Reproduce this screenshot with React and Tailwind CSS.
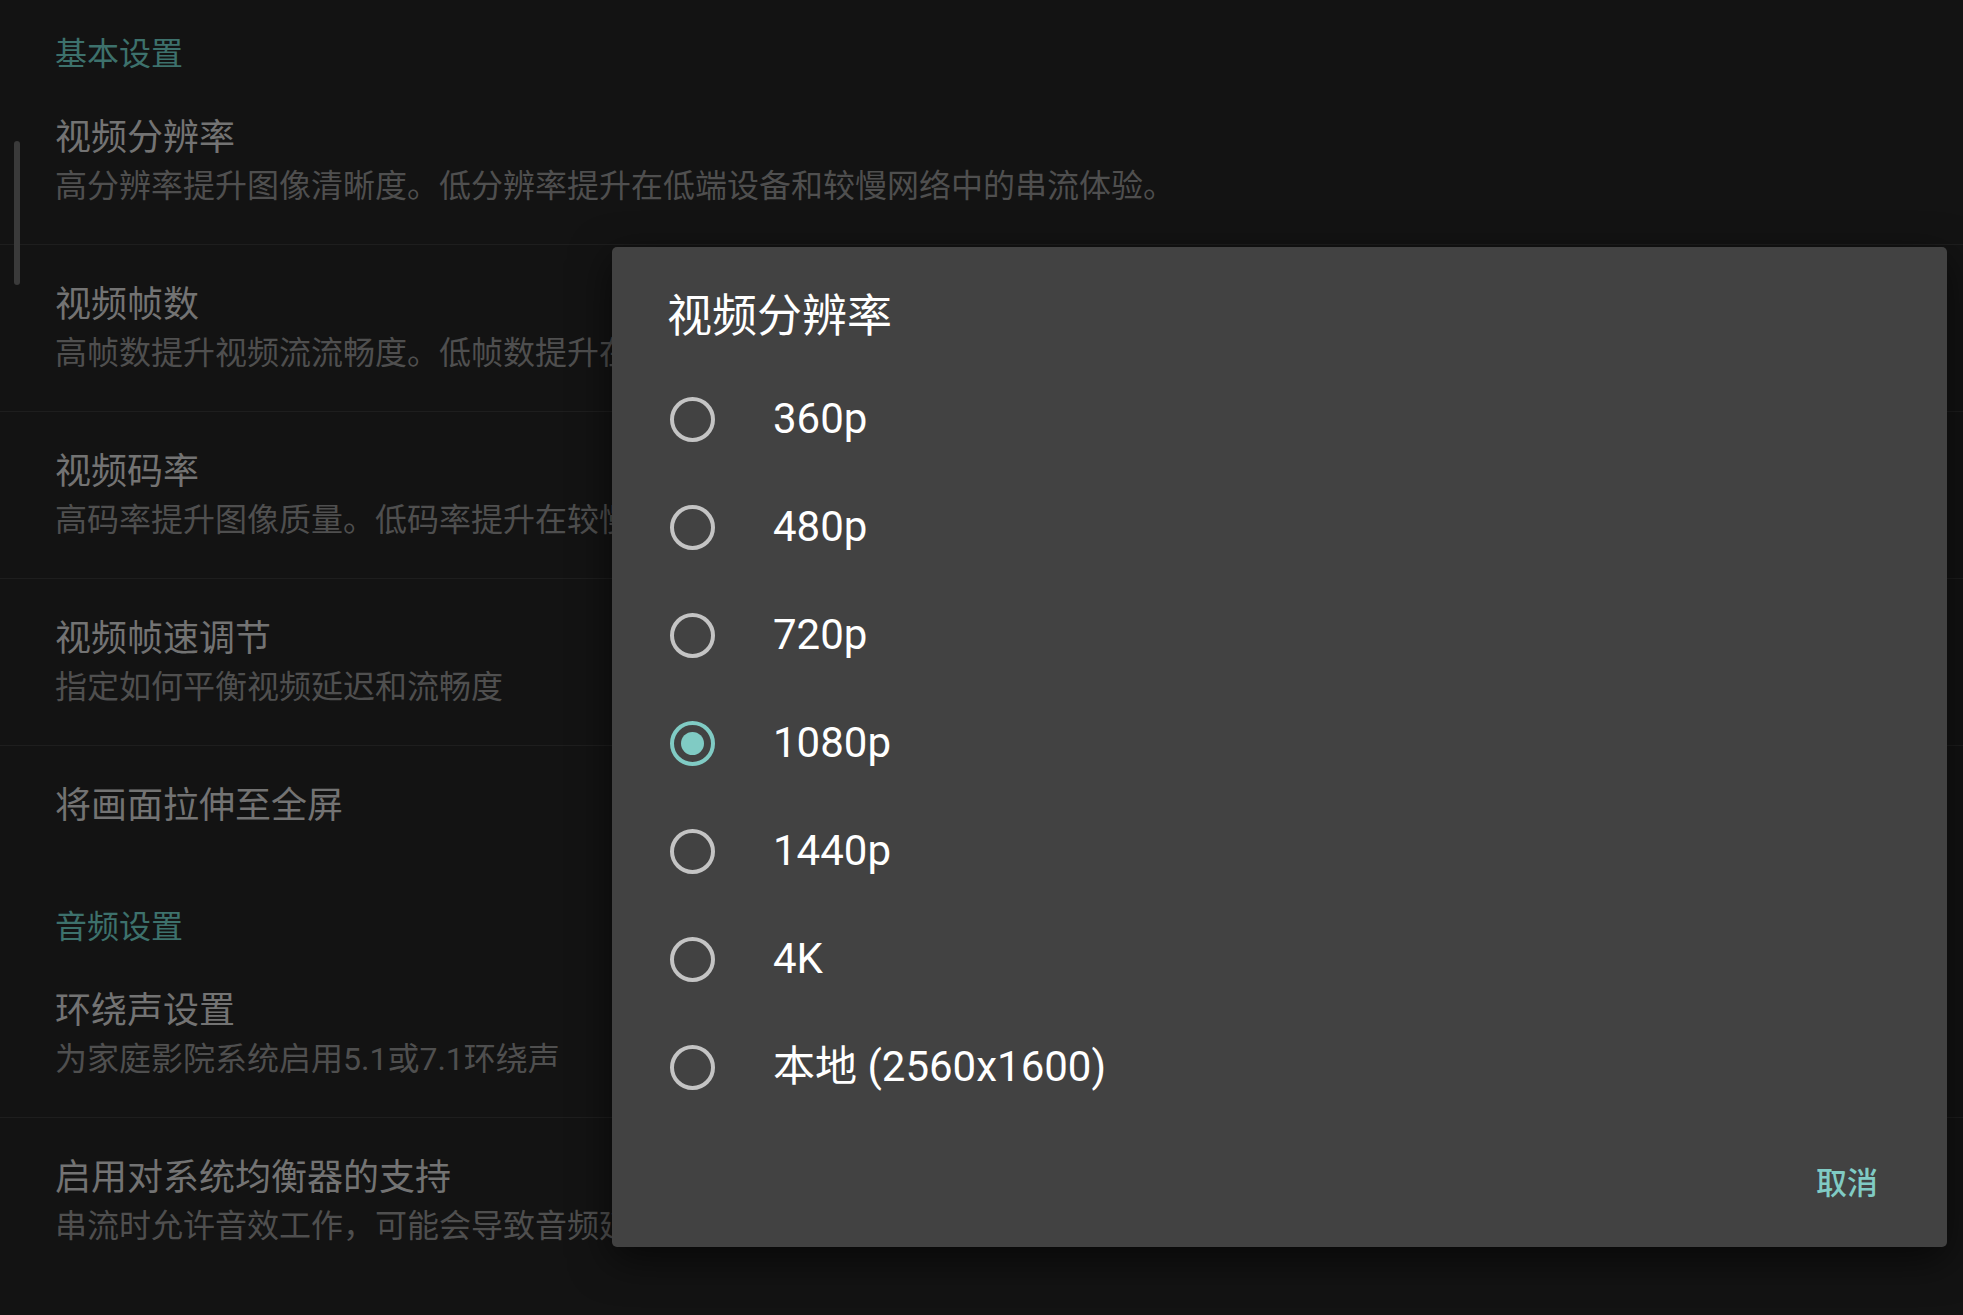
import React from 'react';

// descriptions are only as long as they show beside the open dialog
const basicRows = [
  { title: '视频分辨率', desc: '高分辨率提升图像清晰度。低分辨率提升在低端设备和较慢网络中的串流体验。' },
  { title: '视频帧数', desc: '高帧数提升视频流流畅度。低帧数提升在' },
  { title: '视频码率', desc: '高码率提升图像质量。低码率提升在较慢' },
  { title: '视频帧速调节', desc: '指定如何平衡视频延迟和流畅度' },
];

const audioRows = [
  { title: '环绕声设置', desc: '为家庭影院系统启用5.1或7.1环绕声' },
  { title: '启用对系统均衡器的支持', desc: '串流时允许音效工作，可能会导致音频延' },
];

const options = ['360p', '480p', '720p', '1080p', '1440p', '4K', '本地 (2560x1600)'];

const Header = ({ children }) => (
  <div className="h-[78px] flex items-end pl-[55px] pb-[8px]">
    <span className="text-[32px] leading-[32px] text-[#3d716c] whitespace-nowrap">{children}</span>
  </div>
);

const Row = ({ title, desc, border = true }) => (
  <div className={`pl-[55px] pt-[36px] whitespace-nowrap ${desc ? 'h-[167px]' : 'h-[127px]'} ${border ? 'border-b border-[#1e1e1e]' : ''}`}>
    <div className="w-fit text-[36px] leading-[48px] text-[#737373]">{title}</div>
    {desc && <div className="w-fit text-[32px] leading-[48px] text-[#4f4f4f]">{desc}</div>}
  </div>
);

const Radio = ({ checked }) => (
  <div
    className={`w-[45px] h-[45px] rounded-full border-[4.5px] flex items-center justify-center shrink-0 ${
      checked ? 'border-[#80cbc4]' : 'border-[#c4c4c4]'
    }`}
  >
    {checked && <div className="w-[23px] h-[23px] rounded-full bg-[#80cbc4]" />}
  </div>
);

export default function App() {
  return (
    <div
      className="relative w-[1963px] h-[1315px] bg-[#131313] overflow-hidden"
      style={{ fontFamily: 'Roboto, "Noto Sans CJK SC", sans-serif' }}
    >
      <Header>基本设置</Header>
      {basicRows.map((r) => (
        <Row key={r.title} title={r.title} desc={r.desc} />
      ))}
      <Row title="将画面拉伸至全屏" border={false} />
      <Header>音频设置</Header>
      {audioRows.map((r, i) => (
        <Row key={r.title} title={r.title} desc={r.desc} border={i === 0} />
      ))}

      {/* scroll indicator */}
      <div className="absolute left-[14px] top-[141px] w-[6px] h-[144px] rounded-full bg-[#3a3a3a]" />

      {/* dialog */}
      <div className="absolute left-[612px] top-[247px] w-[1335px] h-[1000px] bg-[#424242] rounded-[5px] shadow-[0_12px_40px_rgba(0,0,0,0.6)] flex flex-col">
        <div className="w-fit ml-[55px] mt-[42px] text-[45px] leading-[56px] text-white">视频分辨率</div>
        <div className="mt-[20px]">
          {options.map((o) => (
            <div key={o} className="h-[108px] flex items-center pl-[58px]">
              <Radio checked={o === '1080p'} />
              <span className="ml-[58px] text-[42px] leading-[56px] text-white whitespace-nowrap">{o}</span>
            </div>
          ))}
        </div>
        <div className="mt-auto mb-[47px] flex justify-end pr-[69px]">
          <span className="text-[31px] leading-[32px] font-medium text-[#80cbc4]">取消</span>
        </div>
      </div>
    </div>
  );
}
